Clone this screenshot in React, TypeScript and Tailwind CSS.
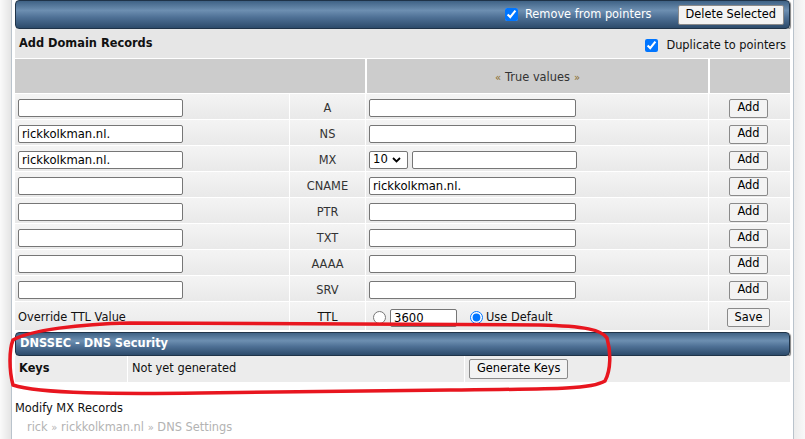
type RecordRow = {
  type: string;
  name?: string;
  value?: string;
  mx?: boolean;
};

const rows: RecordRow[] = [
  { type: "A" },
  { type: "NS", name: "rickkolkman.nl." },
  { type: "MX", name: "rickkolkman.nl.", mx: true },
  { type: "CNAME", value: "rickkolkman.nl." },
  { type: "PTR" },
  { type: "TXT" },
  { type: "AAAA" },
  { type: "SRV" },
];

const bar =
  "bg-[linear-gradient(to_bottom,#3f6285_0%,#6d8fb1_35%,#4f7196_60%,#2d4b6b_100%)] border border-[#1f3348] rounded-[4px] shadow-[1px_1px_1px_rgba(0,0,0,0.5)]";

const btn =
  "h-[19px] px-[7px] border border-[#8a8a8a] rounded-[2px] bg-[#f3f3f3] text-[11.4px] leading-none text-black";

const field =
  "h-[18px] border border-[#767676] rounded-[2px] bg-white px-[3px] text-[11.6px] text-black outline-none";

function Row({ r }: { r: RecordRow }) {
  return (
    <div className="grid grid-cols-[274px_76px_343px_80px] h-[26px] border-b border-white bg-[linear-gradient(to_bottom,#f4f4f4,#e9e9e9)]">
      <div className="flex items-center pl-[3px] pt-[3px]">
        <input className={`${field} w-[165px]`} defaultValue={r.name ?? ""} />
      </div>
      <div className="flex items-center justify-center border-l border-white pt-[4px] text-[#333]">
        {r.type}
      </div>
      <div className="flex items-center pl-[3px] gap-[4px] border-l border-white pt-[3px]">
        {r.mx ? (
          <>
            <div className={`${field} w-[39px] flex items-center gap-[4px]`}>
              <span>10</span>
              <svg width="9" height="6" viewBox="0 0 9 6">
                <path d="M1 1 L4.5 4.5 L8 1" fill="none" stroke="#000" strokeWidth="1.8" />
              </svg>
            </div>
            <input className={`${field} w-[165px]`} />
          </>
        ) : (
          <input className={`${field} w-[207px]`} defaultValue={r.value ?? ""} />
        )}
      </div>
      <div className="flex items-center justify-center border-l border-white pt-[3px]">
        <button className={btn}>Add</button>
      </div>
    </div>
  );
}

export default function App() {
  return (
    <div
      className="relative flex w-[805px] h-[439px] overflow-hidden bg-white text-[11.4px] text-[#111]"
      style={{ fontFamily: '"DejaVu Sans", Verdana, sans-serif' }}
    >
      <div className="w-[11px] bg-[linear-gradient(to_right,#fafafa,#e4e4e4)]" />
      <div className="w-[783px] border-x border-[#b9c3cc] px-[3px]">
        <div className={`${bar} h-[29px] flex items-center justify-end pr-[5px]`}>
          <label className="flex items-center text-white mr-[26px]">
            <input type="checkbox" defaultChecked className="w-[13px] h-[13px] mr-[7px] accent-[#0075ff]" />
            Remove from pointers
          </label>
          <button className={`${btn} h-[20px]`}>Delete Selected</button>
        </div>

        <div className="h-[29px] bg-[#e6e6e6] flex items-center justify-between px-[4px]">
          <span className="font-bold">Add Domain Records</span>
          <label className="flex items-center pt-[5px]">
            <input type="checkbox" defaultChecked className="w-[13px] h-[13px] mr-[8px] accent-[#0075ff]" />
            Duplicate to pointers
          </label>
        </div>

        <div className="grid grid-cols-[350px_343px_80px] h-[36px] bg-[#cccccc] border-t border-white border-b">
          <div />
          <div className="flex items-center justify-center border-l-2 border-white pt-[3px] text-[#333]">
            <span className="text-[#8a6d2a] text-[10px] mr-[4px]">«</span>
            True values
            <span className="text-[#8a6d2a] text-[10px] ml-[4px]">»</span>
          </div>
          <div className="border-l-2 border-white" />
        </div>

        {rows.map((r) => (
          <Row key={r.type} r={r} />
        ))}

        <div className="grid grid-cols-[274px_76px_343px_80px] h-[28px] bg-[linear-gradient(to_bottom,#f4f4f4,#e9e9e9)]">
          <div className="flex items-center pl-[3px] pt-[3px]">Override TTL Value</div>
          <div className="flex items-center justify-center border-l border-white pt-[3px]">TTL</div>
          <div className="flex items-center pl-[7px] border-l border-white pt-[3px]">
            <input type="radio" name="ttl" className="w-[13px] h-[13px] m-0 mr-[4px]" />
            <input className={`${field} w-[67px]`} defaultValue="3600" />
            <input type="radio" name="ttl" defaultChecked className="w-[13px] h-[13px] m-0 ml-[13px] mr-[3px] accent-[#0075ff]" />
            <span>Use Default</span>
          </div>
          <div className="flex items-center justify-center border-l border-white pt-[3px]">
            <button className={btn}>Save</button>
          </div>
        </div>

        <div className="h-[2px]" />
        <div className={`${bar} h-[24px] flex items-center pl-[4px] text-white font-bold`}>
          DNSSEC - DNS Security
        </div>
        <div className="grid grid-cols-[112px_337px_324px] h-[26px] bg-[#ececec]">
          <div className="flex items-center pl-[4px] font-bold">Keys</div>
          <div className="flex items-center pl-[4px] border-l border-white">Not yet generated</div>
          <div className="flex items-center pl-[4px] border-l border-white">
            <button className={`${btn} h-[20px]`}>Generate Keys</button>
          </div>
        </div>

        <div className="pt-[18px]">Modify MX Records</div>
        <div className="pt-[2px] pl-[12px] text-[#b3b3b3]">
          rick <span className="text-[10px]">»</span> rickkolkman.nl <span className="text-[10px]">»</span> DNS Settings
        </div>
      </div>
      <div className="flex-1 bg-[linear-gradient(to_right,#ececec,#f8f8f8)]" />

      <svg className="absolute left-0 top-0 pointer-events-none" width="805" height="439">
        <path
          d="M130 323 L540 325 C585 326 602 330 607 338 C611 352 611 370 605 381 C592 389 560 389 450 390 L200 393 C120 394 40 394 13 385 C9 370 9 350 13 340 C30 330 80 324 130 323 Z"
          fill="none"
          stroke="#e8161f"
          strokeWidth="3.5"
        />
      </svg>
    </div>
  );
}
